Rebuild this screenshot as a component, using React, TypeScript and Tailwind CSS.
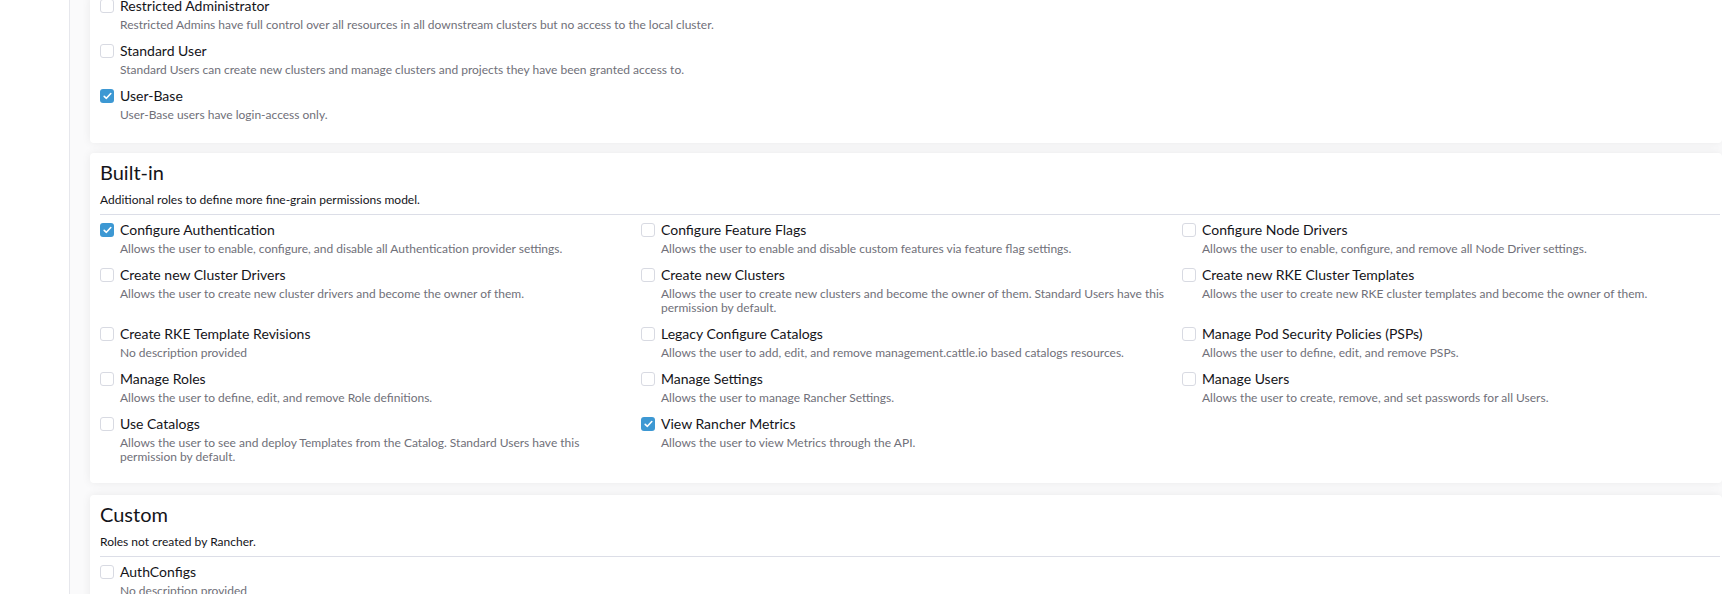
import React from "react";

type Role = { name: string; desc: string; checked?: boolean };

const topRoles: Role[] = [
  {
    name: "Restricted Administrator",
    desc: "Restricted Admins have full control over all resources in all downstream clusters but no access to the local cluster.",
  },
  {
    name: "Standard User",
    desc: "Standard Users can create new clusters and manage clusters and projects they have been granted access to.",
  },
  { name: "User-Base", desc: "User-Base users have login-access only.", checked: true },
];

const builtIn: Role[] = [
  {
    name: "Configure Authentication",
    desc: "Allows the user to enable, configure, and disable all Authentication provider settings.",
    checked: true,
  },
  {
    name: "Configure Feature Flags",
    desc: "Allows the user to enable and disable custom features via feature flag settings.",
  },
  {
    name: "Configure Node Drivers",
    desc: "Allows the user to enable, configure, and remove all Node Driver settings.",
  },
  {
    name: "Create new Cluster Drivers",
    desc: "Allows the user to create new cluster drivers and become the owner of them.",
  },
  {
    name: "Create new Clusters",
    desc: "Allows the user to create new clusters and become the owner of them. Standard Users have this permission by default.",
  },
  {
    name: "Create new RKE Cluster Templates",
    desc: "Allows the user to create new RKE cluster templates and become the owner of them.",
  },
  { name: "Create RKE Template Revisions", desc: "No description provided" },
  {
    name: "Legacy Configure Catalogs",
    desc: "Allows the user to add, edit, and remove management.cattle.io based catalogs resources.",
  },
  {
    name: "Manage Pod Security Policies (PSPs)",
    desc: "Allows the user to define, edit, and remove PSPs.",
  },
  { name: "Manage Roles", desc: "Allows the user to define, edit, and remove Role definitions." },
  { name: "Manage Settings", desc: "Allows the user to manage Rancher Settings." },
  { name: "Manage Users", desc: "Allows the user to create, remove, and set passwords for all Users." },
  {
    name: "Use Catalogs",
    desc: "Allows the user to see and deploy Templates from the Catalog. Standard Users have this permission by default.",
  },
  {
    name: "View Rancher Metrics",
    desc: "Allows the user to view Metrics through the API.",
    checked: true,
  },
];

const Checkbox = ({ checked }: { checked?: boolean }) =>
  checked ? (
    <span className="flex h-[14px] w-[14px] shrink-0 items-center justify-center rounded-[3px] bg-[#3d98d3]">
      <svg width="9" height="8" viewBox="0 0 9 8" fill="none">
        <path d="M1.2 4.3 L3.4 6.3 L7.8 1.5" stroke="#fff" strokeWidth="1.6" strokeLinecap="round" strokeLinejoin="round" />
      </svg>
    </span>
  ) : (
    <span className="block h-[14px] w-[14px] shrink-0 rounded-[3px] border border-[#d8dae2] bg-white"></span>
  );

const RoleItem = ({ role }: { role: Role }) => (
  <div className="flex flex-col pb-[9px] pr-[12px]">
    <div className="flex h-[20px] items-center gap-[6px]">
      <Checkbox checked={role.checked} />
      <span className="text-[14px] leading-[20px] text-[#141419]">{role.name}</span>
    </div>
    <p className="mt-[2px] pl-[20px] text-[12px] leading-[14px] text-[#707079]">{role.desc}</p>
  </div>
);

const Card = ({ children, className = "" }: { children: React.ReactNode; className?: string }) => (
  <section
    className={`rounded-[4px] bg-white pl-[10px] pr-[2px] shadow-[0_0_10px_rgba(0,0,0,0.07)] ${className}`}
  >
    {children}
  </section>
);

const Header = ({ title, sub }: { title: string; sub: string }) => (
  <>
    <h3 className="text-[20px] leading-[24px] font-normal text-[#141419]">{title}</h3>
    <p className="mt-[8px] text-[12px] leading-[16px] text-[#141419]">{sub}</p>
    <div className="mt-[6px] h-px bg-[#dcdee7]"></div>
  </>
);

export default function App() {
  return (
    <div className="flex h-[594px] w-full overflow-hidden bg-white font-['Lato','Liberation_Sans',sans-serif]">
      <aside className="w-[70px] shrink-0 border-r border-[#e6e7ec] bg-white"></aside>
      <main className="flex flex-1 flex-col bg-[#fafafb] pl-[20px]">
        <Card className="-mt-[4px] pb-[12px]">
          {topRoles.map((r) => (
            <RoleItem key={r.name} role={r} />
          ))}
        </Card>
        <Card className="mt-[10px] pt-[7px] pb-[10px]">
          <Header title="Built-in" sub="Additional roles to define more fine-grain permissions model." />
          <div className="mt-[5px] grid grid-cols-[541px_541px_1fr]">
            {builtIn.map((r) => (
              <RoleItem key={r.name} role={r} />
            ))}
          </div>
        </Card>
        <Card className="mt-[12px] pt-[7px] pb-[10px]">
          <Header title="Custom" sub="Roles not created by Rancher." />
          <div className="mt-[5px] grid grid-cols-[541px_541px_1fr]">
            <RoleItem role={{ name: "AuthConfigs", desc: "No description provided" }} />
          </div>
        </Card>
      </main>
    </div>
  );
}
